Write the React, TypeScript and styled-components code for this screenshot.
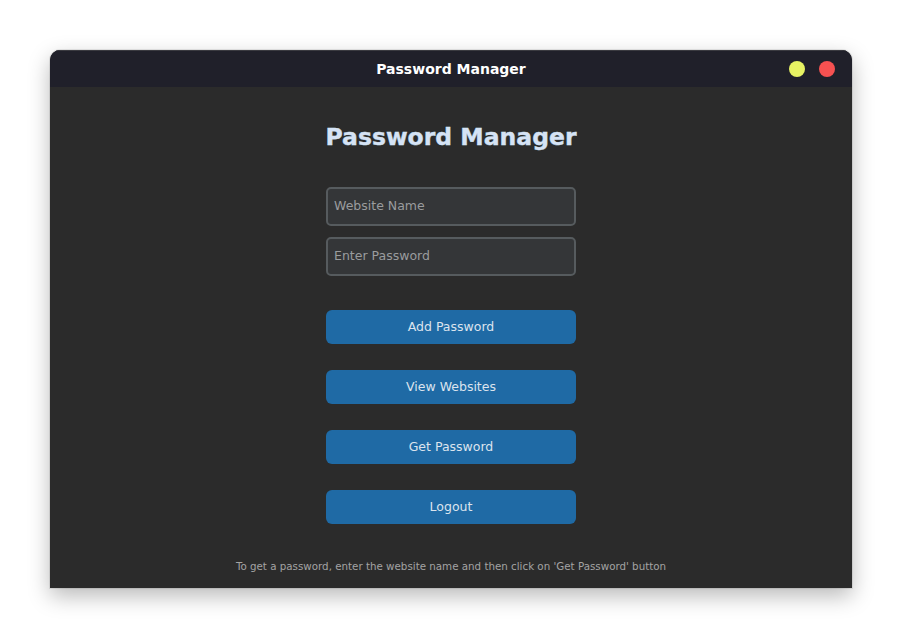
import React from "react";
import styled, { createGlobalStyle } from "styled-components";

const Global = createGlobalStyle`
  html, body { margin: 0; padding: 0; background: #ffffff; }
  body { font-family: "DejaVu Sans", "Open Sans", sans-serif; }
  * { box-sizing: border-box; }
`;

const Stage = styled.div`
  width: 902px;
  height: 638px;
  padding: 50px 50px 0 50px;
`;

const Window = styled.div`
  width: 802px;
  height: 538px;
  display: flex;
  flex-direction: column;
  border-radius: 10px 10px 0 0;
  overflow: hidden;
  background: #2b2b2b;
  box-shadow: 0 0 0 1px rgba(0,0,0,0.08), 0 8px 22px rgba(0,0,0,0.28);
`;

const TitleBar = styled.div`
  height: 37px;
  flex: none;
  background: #20202a;
  display: flex;
  align-items: center;
  justify-content: center;
  position: relative;
  border-top: 1px solid #3a3a40;
`;

const TitleText = styled.div`
  color: #ffffff;
  font-family: "DejaVu Sans", sans-serif;
  font-weight: 700;
  font-size: 14px;
`;

const Controls = styled.div`
  position: absolute;
  right: 17px;
  top: 10px;
  display: flex;
  gap: 14px;
`;

const Dot = styled.span<{ $color: string }>`
  width: 16px;
  height: 16px;
  border-radius: 50%;
  background: ${(p) => p.$color};
`;

const Content = styled.div`
  flex: 1;
  display: flex;
  flex-direction: column;
  align-items: center;
  padding-top: 35px;
`;

const Heading = styled.h1`
  margin: 0 0 35px 0;
  height: 30px;
  line-height: 30px;
  font-family: "DejaVu Sans", sans-serif;
  font-weight: 800;
  font-size: 23.5px;
  color: #d5e3f5;
  -webkit-text-stroke: 0.4px #d5e3f5;
`;

const Field = styled.input`
  width: 250px;
  height: 39px;
  border: 2px solid #565b5e;
  border-radius: 5px;
  background: #343638;
  color: #dce4ee;
  padding: 0 6px 2px 6px;
  font-family: "DejaVu Sans", sans-serif;
  font-size: 12.5px;
  outline: none;
  margin-bottom: 11px;
  &::placeholder { color: #9a9c9e; }
`;

const Buttons = styled.div`
  margin-top: 23px;
  display: flex;
  flex-direction: column;
  gap: 26px;
`;

const Button = styled.button`
  width: 250px;
  height: 34px;
  border: none;
  border-radius: 6px;
  background: #1f6aa5;
  color: #dce4ee;
  padding: 0 0 2px 0;
  font-family: "DejaVu Sans", sans-serif;
  font-size: 12.5px;
  cursor: pointer;
`;

const Hint = styled.div`
  margin-top: auto;
  margin-bottom: 16px;
  color: #a3a3a3;
  font-family: "DejaVu Sans", sans-serif;
  font-size: 10.3px;
`;

export default function App() {
  return (
    <>
      <Global />
      <Stage>
        <Window>
          <TitleBar>
            <TitleText>Password Manager</TitleText>
            <Controls>
              <Dot $color="#e7f263" />
              <Dot $color="#f65151" />
            </Controls>
          </TitleBar>
          <Content>
            <Heading>Password Manager</Heading>
            <Field placeholder="Website Name" />
            <Field placeholder="Enter Password" type="password" />
            <Buttons>
              <Button>Add Password</Button>
              <Button>View Websites</Button>
              <Button>Get Password</Button>
              <Button>Logout</Button>
            </Buttons>
            <Hint>To get a password, enter the website name and then click on 'Get Password' button</Hint>
          </Content>
        </Window>
      </Stage>
    </>
  );
}
